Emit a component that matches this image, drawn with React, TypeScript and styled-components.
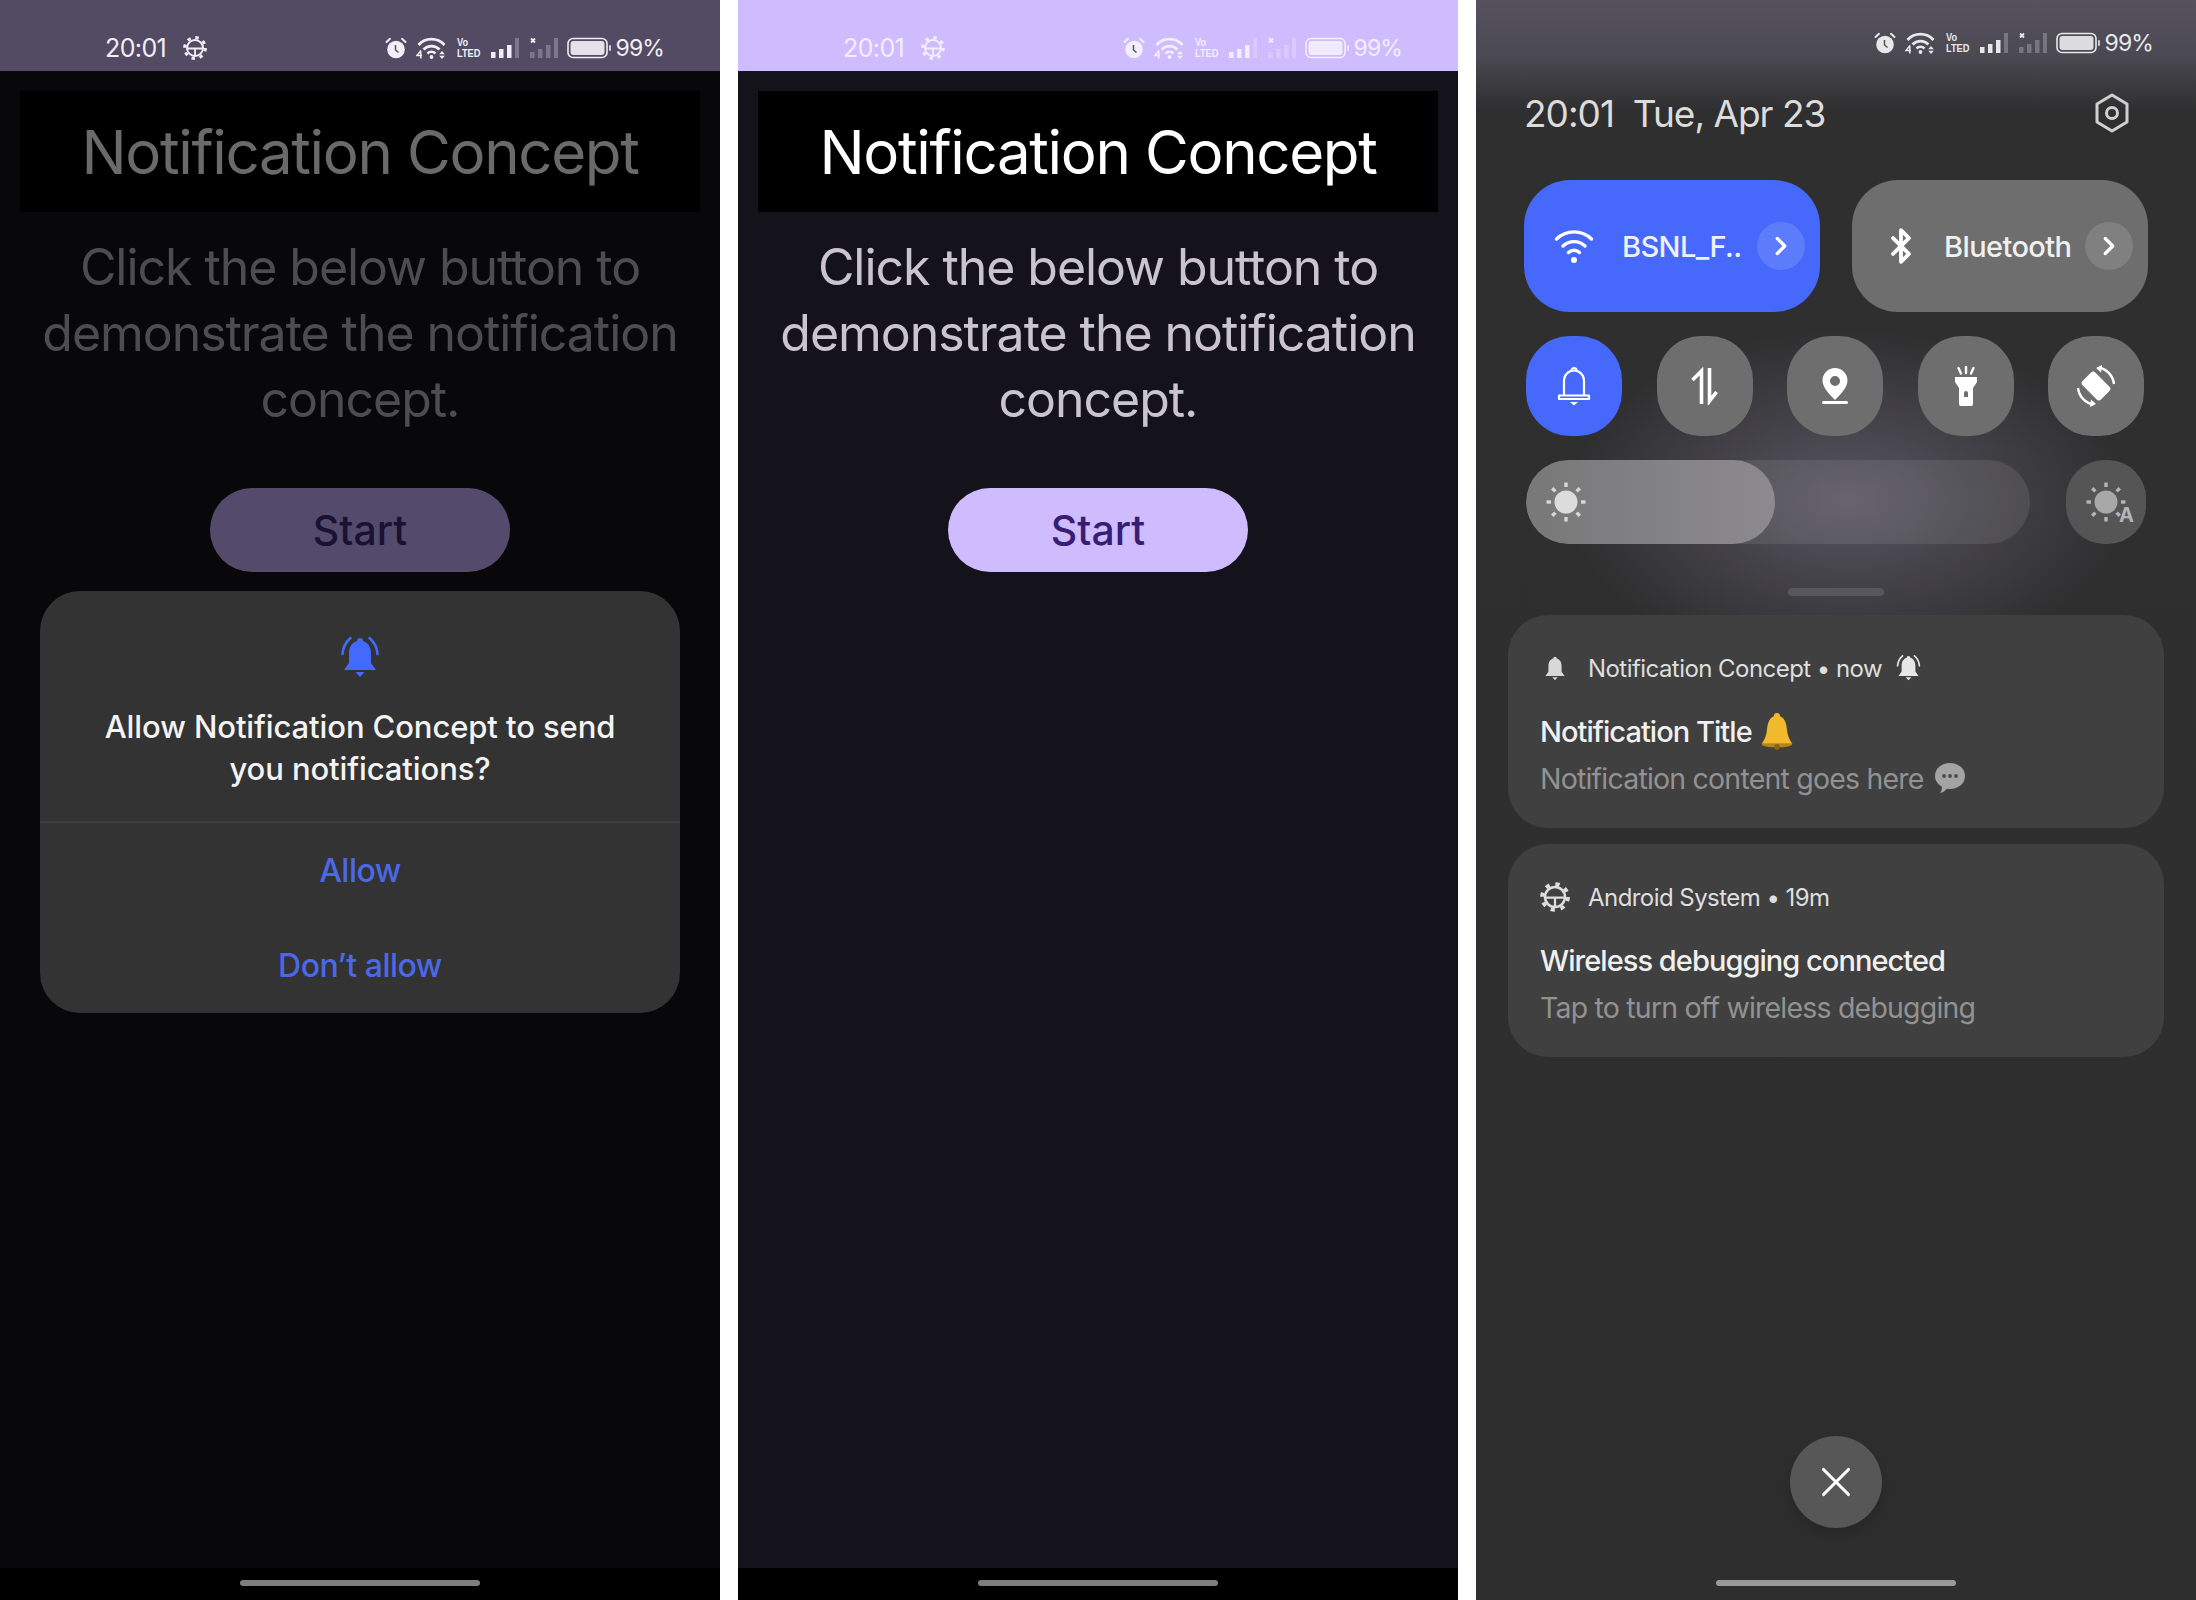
import styled, { createGlobalStyle } from "styled-components";
import { Bluetooth, ChevronRight, X } from "lucide-react";

const GlobalStyle = createGlobalStyle`
  html, body {
    margin: 0;
    background: #fff;
  }
  * {
    box-sizing: border-box;
  }
`;

interface DimProps {
  $dim?: boolean;
}

/* status bar glyphs */

const GearBadge = ({ size = 24 }: { size?: number }) => (
  <svg width={size} height={size} viewBox="0 0 24 24" fill="none" stroke="currentColor">
    <circle cx="12" cy="12" r="10.4" strokeWidth="3" strokeDasharray="3.4 4.77" />
    <circle cx="12" cy="12" r="8" strokeWidth="2" />
    <path d="M4 12.500h16M12 12.500v7.500" strokeWidth="1.800" />
  </svg>
);

const AlarmGlyph = () => (
  <svg width="22" height="22" viewBox="0 0 22 22">
    <circle cx="11" cy="12.500" r="8.800" fill="currentColor" />
    <path d="M1.500 5 5 1.800M20.500 5 17 1.800" stroke="currentColor" strokeWidth="2" strokeLinecap="round" />
    <path d="M10.500 8v5l3 2.500" stroke="#555" strokeWidth="1.500" fill="none" />
  </svg>
);

const WifiStatusGlyph = () => (
  <svg width="31" height="22" viewBox="0 0 31 22" fill="none" stroke="currentColor">
    <path d="M2.500 8a17.500 17.500 0 0 1 26 0" strokeWidth="2.800" />
    <path d="M7.500 12.500a11 11 0 0 1 16 0" strokeWidth="2.800" />
    <path d="M11.500 16.500a5.500 5.500 0 0 1 8 0" strokeWidth="2.600" />
    <circle cx="15.500" cy="20" r="1.900" fill="currentColor" stroke="none" />
    <path d="M5 13.500 1 18.500h5M4.800 13.500v8" strokeWidth="1.500" />
    <path d="M26 14l2.800 3.200h-5.600zM26 22l2.800-3.200h-5.600z" fill="currentColor" stroke="none" />
  </svg>
);

const SignalGlyph = ({ level }: { level: number }) => (
  <svg width="29" height="22" viewBox="0 0 29 22" fill="currentColor">
    {level === 0 && <path d="M2 1.500l4 4M6 1.500l-4 4" stroke="currentColor" strokeWidth="1.800" />}
    {[
      { x: 1, h: 6 },
      { x: 9, h: 9 },
      { x: 17, h: 13 },
      { x: 25, h: 20 },
    ].map((bar, i) => (
      <rect
        key={bar.x}
        x={bar.x}
        y={21 - bar.h}
        width="4.500"
        height={bar.h}
        opacity={i < level ? 1 : 0.28}
      />
    ))}
  </svg>
);

const BatteryGlyph = () => (
  <svg width="45" height="22" viewBox="0 0 45 22">
    <rect x="1" y="1.500" width="39" height="19" rx="5" fill="none" stroke="currentColor" strokeWidth="1.600" />
    <rect x="3.500" y="4" width="34" height="14" rx="3" fill="currentColor" opacity="0.92" />
    <rect x="42" y="8" width="2" height="6" rx="1" fill="currentColor" opacity="0.8" />
  </svg>
);

const StatusIcons = () => (
  <StatusIconRow>
    <AlarmGlyph />
    <WifiStatusGlyph />
    <VoLte>
      <span>Vo</span>
      <span>LTED</span>
    </VoLte>
    <SignalGlyph level={3} />
    <SignalGlyph level={0} />
    <BatteryGlyph />
    <Percent>99%</Percent>
  </StatusIconRow>
);

/* quick settings glyphs */

const WifiGlyph = () => (
  <svg width="40" height="36" viewBox="0 0 40 36" fill="none" stroke="#fff" strokeWidth="3.400" strokeLinecap="round">
    <path d="M2.500 11a25 25 0 0 1 35 0" />
    <path d="M9 18a16 16 0 0 1 22 0" />
    <path d="M14.500 24.500a8 8 0 0 1 11 0" />
    <circle cx="20" cy="32" r="3" fill="#fff" stroke="none" />
  </svg>
);

const BellOutline = () => (
  <svg width="34" height="40" viewBox="0 0 34 40" fill="none" stroke="#fff" strokeWidth="2.200">
    <path d="M7 29V14.500a10 10 0 0 1 20 0V29" />
    <path d="M2 29.500h30v3.500H2z" strokeLinejoin="round" />
    <path d="M14.500 4.500a2.500 2.500 0 0 1 5 0" />
    <path d="M13 36h8l-4 3.500z" fill="#fff" stroke="none" />
  </svg>
);

const DataGlyph = () => (
  <svg width="30" height="38" viewBox="0 0 30 38" fill="none" stroke="#fff" strokeWidth="3.600" strokeLinejoin="miter">
    <path d="M11.500 37V4L2.500 13" />
    <path d="M19.500 1v33l7-9" />
  </svg>
);

const PinGlyph = () => (
  <svg width="30" height="36" viewBox="0 0 30 36">
    <path
      fillRule="evenodd"
      fill="#fff"
      d="M15 0a12.500 12.500 0 0 1 12.500 12.500C27.500 20 19 28 15 32 11 28 2.500 20 2.500 12.500A12.500 12.500 0 0 1 15 0zm0 8a5 5 0 1 0 0 10 5 5 0 0 0 0-10z"
    />
    <rect x="2" y="33" width="26" height="3" rx="1.500" fill="#fff" />
  </svg>
);

const TorchGlyph = () => (
  <svg width="24" height="40" viewBox="0 0 24 40">
    <path d="M12 0v7M4.500 2l2.500 5.500M19.500 2 17 7.500" stroke="#fff" strokeWidth="2.400" strokeLinecap="round" />
    <path
      fillRule="evenodd"
      fill="#fff"
      d="M1 11h22v5l-4 6v16a2 2 0 0 1-2 2H7a2 2 0 0 1-2-2V22l-4-6zm11 14a2 2 0 0 0-2 2v4h4v-4a2 2 0 0 0-2-2z"
    />
  </svg>
);

const RotateGlyph = () => (
  <svg width="42" height="42" viewBox="0 0 42 42" fill="none" stroke="#fff" strokeWidth="2.400">
    <rect x="12" y="8" width="18" height="26" rx="3" fill="#fff" stroke="none" transform="rotate(-45 21 21)" />
    <path d="M24 2.500A19 19 0 0 1 39 19" />
    <path d="M18 39.500A19 19 0 0 1 3 23" />
    <path d="M27 0l-6 3 5 4.500zM15 42l6-3-5-4.500z" fill="#fff" stroke="none" />
  </svg>
);

const SunGlyph = ({ core, ray }: { core: string; ray: string }) => (
  <svg width="40" height="40" viewBox="0 0 40 40">
    <circle cx="20" cy="20" r="11.500" fill={core} />
    {[0, 45, 90, 135, 180, 225, 270, 315].map((deg) => (
      <rect key={deg} x="18.300" y="0.500" width="3.400" height="4.500" fill={ray} transform={`rotate(${deg} 20 20)`} />
    ))}
  </svg>
);

const HexGlyph = () => (
  <svg width="36" height="40" viewBox="0 0 36 40" fill="none" stroke="#cfcfcf" strokeWidth="3">
    <path d="M18 2 33 11v18l-15 9-15-9V11z" strokeLinejoin="round" />
    <circle cx="18" cy="20" r="5.500" />
  </svg>
);

/* notification glyphs */

const BellSolid = ({ ringing, color = "currentColor", size = 24 }: { ringing?: boolean; color?: string; size?: number }) => (
  <svg width={size} height={size * 1.1} viewBox="0 0 40 44" fill={color}>
    <path d="M20 3a3 3 0 0 1 3 3c6 2 8 7 8 13v9l5 7H4l5-7v-9c0-6 2-11 8-13a3 3 0 0 1 3-3z" />
    <path d="M15.500 37h9l-4.500 5z" />
    {ringing && (
      <g fill="none" stroke={color} strokeWidth="2.600" strokeLinecap="round">
        <path d="M10.500 3C6 7 3 12 2.500 19" />
        <path d="M29.500 3c4.500 4 7.500 9 8 16" />
      </g>
    )}
  </svg>
);

const GoldBell = () => (
  <svg width="34" height="38" viewBox="0 0 32 36">
    <path d="M16 1a3 3 0 0 1 3 3c5 2 6 8 6.500 13 .5 5 2 9 5 13H1.500c3-4 4.500-8 5-13C7 12 8 6 13 4a3 3 0 0 1 3-3z" fill="#f2b92c" />
    <path d="M1.500 30h29c.5 2-6 3.500-14.500 3.500S1 32 1.500 30z" fill="#b98512" />
    <circle cx="16" cy="33" r="2.800" fill="#8a6410" />
  </svg>
);

const ChatBubble = () => (
  <svg width="32" height="32" viewBox="0 0 32 32">
    <path d="M16 1c8.500 0 15 5.500 15 13s-6.500 13-15 13c-1 0-2 0-3-.2C11 29 8.500 31 6 31c1.500-2 2-4 1.800-6.500C3.500 22 1 18.500 1 14 1 6.500 7.500 1 16 1z" fill="#a3a3a3" />
    <circle cx="10" cy="14" r="1.900" fill="#4a4a4a" />
    <circle cx="16" cy="14" r="1.900" fill="#4a4a4a" />
    <circle cx="22" cy="14" r="1.900" fill="#4a4a4a" />
  </svg>
);

const AppScreen = ({ dim }: { dim?: boolean }) => (
  <Phone $dim={dim}>
    <StatusBar $dim={dim}>
      <Clock>
        20:01
        <GearBadge />
      </Clock>
      <StatusIcons />
    </StatusBar>
    <TitleBox $dim={dim}>Notification Concept</TitleBox>
    <Description $dim={dim}>Click the below button to demonstrate the notification concept.</Description>
    <StartButton $dim={dim}>Start</StartButton>
    {dim && (
      <Dialog>
        <DialogHead>
          <BellSolid ringing color="#4369ff" size={40} />
          <DialogText>Allow Notification Concept to send you notifications?</DialogText>
        </DialogHead>
        <DialogAction>Allow</DialogAction>
        <DialogAction>Don’t allow</DialogAction>
      </Dialog>
    )}
    <Spacer />
    <NavStrip>
      <HomeBar />
    </NavStrip>
  </Phone>
);

const ShadePanel = () => (
  <Shade>
    <ShadeStatus>
      <StatusIcons />
    </ShadeStatus>
    <DateRow>
      <DateText>20:01&nbsp;&nbsp;Tue, Apr 23</DateText>
      <HexGlyph />
    </DateRow>
    <WideTiles>
      <WideTile $active>
        <WifiGlyph />
        <WideLabel $gap={28}>BSNL_F..</WideLabel>
        <Chevron>
          <ChevronRight size={30} strokeWidth={2.6} />
        </Chevron>
      </WideTile>
      <WideTile>
        <Bluetooth size={38} strokeWidth={2.4} />
        <WideLabel $gap={24}>Bluetooth</WideLabel>
        <Chevron>
          <ChevronRight size={30} strokeWidth={2.6} />
        </Chevron>
      </WideTile>
    </WideTiles>
    <RoundTiles>
      <RoundTile $active>
        <BellOutline />
      </RoundTile>
      <RoundTile>
        <DataGlyph />
      </RoundTile>
      <RoundTile>
        <PinGlyph />
      </RoundTile>
      <RoundTile>
        <TorchGlyph />
      </RoundTile>
      <RoundTile>
        <RotateGlyph />
      </RoundTile>
    </RoundTiles>
    <BrightnessRow>
      <Slider>
        <SliderFill>
          <SunGlyph core="#dcdcdc" ray="#d8d8d8" />
        </SliderFill>
      </Slider>
      <AutoTile>
        <SunGlyph core="#a8a8a8" ray="#b5b5b5" />
        <AutoLetter>A</AutoLetter>
      </AutoTile>
    </BrightnessRow>
    <Handle />
    <Cards>
      <Card>
        <CardHead>
          <CardIcon>
            <BellSolid size={24} color="#d8d8d8" />
          </CardIcon>
          Notification Concept • now
          <HeadBadge>
            <BellSolid ringing size={25} color="#e6e6e6" />
          </HeadBadge>
        </CardHead>
        <CardTitle>
          Notification Title <GoldBell />
        </CardTitle>
        <CardBody>
          Notification content goes here <ChatBubble />
        </CardBody>
      </Card>
      <Card>
        <CardHead>
          <CardIcon>
            <GearBadge size={30} />
          </CardIcon>
          Android System • 19m
        </CardHead>
        <CardTitle>Wireless debugging connected</CardTitle>
        <CardBody>Tap to turn off wireless debugging</CardBody>
      </Card>
    </Cards>
    <Spacer />
    <CloseButton>
      <X size={50} strokeWidth={1.5} color="#fff" />
    </CloseButton>
    <ShadeFoot>
      <ShadeHomeBar />
    </ShadeFoot>
  </Shade>
);

const App = () => (
  <>
    <GlobalStyle />
    <Page>
      <AppScreen dim />
      <AppScreen />
      <ShadePanel />
    </Page>
  </>
);

const Page = styled.div`
  display: grid;
  grid-template-columns: repeat(3, 720px);
  column-gap: 18px;
  width: 2196px;
  height: 1600px;
  overflow: hidden;
  font-family: Inter, "Liberation Sans", sans-serif;
`;

const Phone = styled.div<DimProps>`
  display: flex;
  flex-direction: column;
  align-items: center;
  height: 1600px;
  background: ${(p) => (p.$dim ? "#08080b" : "#14121a")};
`;

const StatusBar = styled.div<DimProps>`
  display: flex;
  align-items: center;
  justify-content: space-between;
  width: 100%;
  height: 71px;
  padding: 25px 56px 0 105px;
  background: ${(p) => (p.$dim ? "#534a63" : "#cfbcff")};
  color: ${(p) => (p.$dim ? "#f1eef6" : "#f3eefc")};
`;

const Clock = styled.div`
  display: flex;
  align-items: center;
  gap: 17px;
  font-size: 25px;
  letter-spacing: -0.6px;
`;

const StatusIconRow = styled.div`
  display: flex;
  align-items: center;
  gap: 9.500px;
`;

const VoLte = styled.div`
  display: flex;
  flex-direction: column;
  width: 24px;
  font-family: "Liberation Sans", sans-serif;
  font-size: 11px;
  font-weight: 700;
  line-height: 11px;

  span {
    display: block;
    height: 11px;
    white-space: nowrap;
    transform: scaleX(0.84);
    transform-origin: left center;
  }
`;

const Percent = styled.span`
  margin-left: -6px;
  font-size: 23px;
  letter-spacing: -0.9px;
`;

const TitleBox = styled.div<DimProps>`
  display: flex;
  align-items: center;
  justify-content: center;
  width: 680px;
  height: 121px;
  margin-top: 20px;
  padding-top: 1px;
  background: #000;
  color: ${(p) => (p.$dim ? "#6a6a6a" : "#ffffff")};
  font-size: 60px;
  letter-spacing: -1.350px;
`;

const Description = styled.div<DimProps>`
  width: 660px;
  margin-top: 22px;
  text-align: center;
  color: ${(p) => (p.$dim ? "#4d4c50" : "#cac4d0")};
  font-size: 50px;
  line-height: 66px;
  letter-spacing: -1.050px;
`;

const StartButton = styled.div<DimProps>`
  display: flex;
  align-items: center;
  justify-content: center;
  width: 300px;
  height: 84px;
  margin-top: 56px;
  border-radius: 42px;
  background: ${(p) => (p.$dim ? "#544a6b" : "#cfbcff")};
  color: ${(p) => (p.$dim ? "#1a1233" : "#381e72")};
  font-size: 41px;
  font-weight: 500;
`;

const Dialog = styled.div`
  width: 640px;
  height: 422px;
  margin-top: 19px;
  border-radius: 40px;
  background: #333333;
  overflow: hidden;
`;

const DialogHead = styled.div`
  display: flex;
  flex-direction: column;
  align-items: center;
  height: 232px;
  padding-top: 44px;
  border-bottom: 2px solid #3c3c3c;
`;

const DialogText = styled.div`
  width: 530px;
  margin-top: 27px;
  text-align: center;
  color: #f4f4f4;
  font-size: 31px;
  font-weight: 500;
  line-height: 42px;
  letter-spacing: -0.1px;
`;

const DialogAction = styled.div`
  display: flex;
  align-items: center;
  justify-content: center;
  height: 95px;
  color: #4a68e8;
  font-size: 32px;
  font-weight: 500;
  letter-spacing: -0.5px;
`;

const Spacer = styled.div`
  flex: 1;
`;

const NavStrip = styled.div`
  display: flex;
  justify-content: center;
  width: 100%;
  height: 32px;
  padding-top: 12px;
  background: #000;
`;

const HomeBar = styled.div`
  width: 240px;
  height: 6px;
  border-radius: 3px;
  background: #7e7e7e;
`;

const Shade = styled.div`
  display: flex;
  flex-direction: column;
  align-items: center;
  height: 1600px;
  color: #ececec;
  background:
    radial-gradient(280px 170px at 372px 500px, rgba(96, 92, 106, 0.85), rgba(96, 92, 106, 0) 100%),
    linear-gradient(180deg, #55525e 0, #4b4952 55px, #2f2f30 110px, #2e2e2e 100%);
`;

const ShadeStatus = styled.div`
  display: flex;
  justify-content: flex-end;
  width: 100%;
  height: 60px;
  padding: 26px 43px 0 0;
  color: #e8e8ea;
`;

const DateRow = styled.div`
  display: flex;
  align-items: center;
  justify-content: space-between;
  width: 100%;
  height: 60px;
  margin-top: 23px;
  padding: 0 66px 0 48px;
`;

const DateText = styled.div`
  color: #dcdcdc;
  font-size: 37px;
  letter-spacing: -1px;
`;

const WideTiles = styled.div`
  display: flex;
  justify-content: space-between;
  width: 624px;
  margin-top: 37px;
`;

const WideTile = styled.div<{ $active?: boolean }>`
  display: flex;
  align-items: center;
  width: 296px;
  height: 132px;
  padding: 0 15px 0 30px;
  border-radius: 46px;
  background: ${(p) => (p.$active ? "#4669fb" : "#6e6e6e")};
  color: #fff;
`;

const WideLabel = styled.span<{ $gap: number }>`
  flex: 1;
  margin-left: ${(p) => p.$gap}px;
  color: #f0f0f0;
  font-size: 29px;
  font-weight: 500;
  letter-spacing: -0.6px;
  white-space: nowrap;
`;

const Chevron = styled.div`
  display: flex;
  align-items: center;
  justify-content: center;
  width: 48px;
  height: 48px;
  border-radius: 50%;
  background: rgba(255, 255, 255, 0.13);
  color: #fff;
`;

const RoundTiles = styled.div`
  display: flex;
  justify-content: space-between;
  width: 618px;
  margin-top: 24px;
  margin-left: -2px;
`;

const RoundTile = styled.div<{ $active?: boolean }>`
  display: flex;
  align-items: center;
  justify-content: center;
  width: 96px;
  height: 100px;
  border-radius: 44px;
  background: ${(p) => (p.$active ? "#4669fb" : "#6e6e6e")};
`;

const BrightnessRow = styled.div`
  display: flex;
  justify-content: space-between;
  width: 620px;
  margin-top: 24px;
`;

const Slider = styled.div`
  width: 504px;
  height: 84px;
  border-radius: 42px;
  background: rgba(255, 255, 255, 0.09);
  overflow: hidden;
`;

const SliderFill = styled.div`
  display: flex;
  align-items: center;
  width: 249px;
  height: 100%;
  padding-left: 20px;
  border-radius: 42px;
  background: linear-gradient(90deg, #787878, #8c8a90);
`;

const AutoTile = styled.div`
  position: relative;
  display: flex;
  align-items: center;
  justify-content: center;
  width: 80px;
  height: 84px;
  border-radius: 38px;
  background: #555555;
`;

const AutoLetter = styled.span`
  position: absolute;
  right: 12px;
  bottom: 17px;
  color: #b5b5b5;
  font-size: 20px;
  font-weight: 700;
`;

const Handle = styled.div`
  width: 96px;
  height: 8px;
  margin-top: 44px;
  border-radius: 4px;
  background: #585760;
`;

const Cards = styled.div`
  display: flex;
  flex-direction: column;
  gap: 16px;
  width: 656px;
  margin-top: 19px;
`;

const Card = styled.div`
  height: 213px;
  padding: 36px 32px 0;
  border-radius: 40px;
  background: #404040;
`;

const CardHead = styled.div`
  display: flex;
  align-items: center;
  height: 34px;
  color: #dedede;
  font-size: 24px;
  letter-spacing: -0.55px;
`;

const HeadBadge = styled.span`
  display: flex;
  margin-left: 14px;
`;

const CardIcon = styled.div`
  display: flex;
  justify-content: center;
  width: 30px;
  margin-right: 18px;
`;

const CardTitle = styled.div`
  display: flex;
  align-items: center;
  gap: 8px;
  height: 40px;
  margin-top: 26px;
  color: #f0f0f0;
  font-size: 29px;
  font-weight: 500;
  letter-spacing: -0.95px;
`;

const CardBody = styled.div`
  display: flex;
  align-items: center;
  gap: 10px;
  height: 40px;
  margin-top: 7px;
  color: #929292;
  font-size: 28.500px;
  letter-spacing: -0.8px;
`;

const CloseButton = styled.div`
  display: flex;
  align-items: center;
  justify-content: center;
  width: 92px;
  height: 92px;
  border-radius: 50%;
  background: #575757;
  box-shadow: 0 6px 14px rgba(0, 0, 0, 0.18);
`;

const ShadeFoot = styled.div`
  height: 72px;
  padding-top: 52px;
`;

const ShadeHomeBar = styled.div`
  width: 240px;
  height: 6px;
  border-radius: 3px;
  background: #999999;
`;

export default App;
